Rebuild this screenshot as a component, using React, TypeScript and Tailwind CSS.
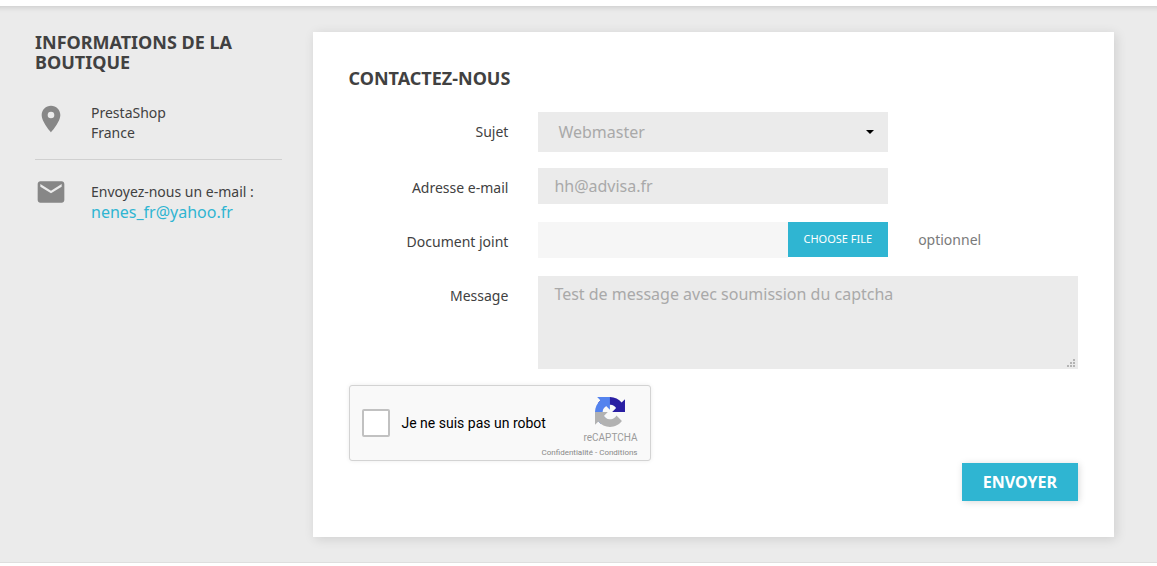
import React from 'react';
import { MdEmail, MdLocationOn } from 'react-icons/md';

const subjects = ['Webmaster', 'Service client'];

interface FieldRowProps {
  id: string;
  label: string;
  wide?: boolean;
  hint?: string;
  children: React.ReactNode;
}

function FieldRow({ id, label, wide, hint, children }: FieldRowProps) {
  return (
    <div className="grid grid-cols-4 gap-x-[30px]">
      <label htmlFor={id} className="pt-[10px] text-right text-sm leading-5">
        {label}
      </label>
      <div className={wide ? 'relative col-span-3 flex' : 'relative col-span-2 flex'}>{children}</div>
      {hint && <span className="pt-2 text-sm leading-5 text-[#7a7a7a]">{hint}</span>}
    </div>
  );
}

function RecaptchaLogo() {
  return (
    <svg viewBox="0 0 64 64" className="h-[30px] w-[30px]" aria-hidden="true">
      <path
        fill="#2a1fa3"
        d="M64 31.955l-.033-1.37V4.687l-7.16 7.16C50.948 4.674 42.033.093 32.05.093c-10.4 0-19.622 4.96-25.458 12.64l11.736 11.86a15.55 15.55 0 0 1 4.754-5.334c2.05-1.6 4.952-2.906 8.968-2.906.485 0 .86.057 1.135.163 4.976.393 9.288 3.14 11.828 7.124l-8.307 8.307L64 31.953"
      />
      <path
        fill="#5483ee"
        d="M31.862.094l-1.37.033H4.594l7.16 7.16C4.58 13.147 0 22.06 0 32.046c0 10.4 4.96 19.622 12.64 25.458L24.5 45.768a15.55 15.55 0 0 1-5.334-4.754c-1.6-2.05-2.906-4.952-2.906-8.968 0-.485.057-.86.163-1.135.393-4.976 3.14-9.288 7.124-11.828l8.307 8.307L31.86.095"
      />
      <path
        fill="#b2b2b2"
        d="M.001 32.045l.033 1.37v25.898l7.16-7.16c5.86 7.173 14.774 11.754 24.76 11.754 10.4 0 19.622-4.96 25.458-12.64l-11.736-11.86a15.55 15.55 0 0 1-4.754 5.334c-2.05 1.6-4.952 2.906-8.968 2.906-.485 0-.86-.057-1.135-.163-4.976-.393-9.288-3.14-11.828-7.124l8.307-8.307c-10.522.04-22.4.066-27.295-.005"
      />
    </svg>
  );
}

function Recaptcha() {
  return (
    <div className="flex h-[76px] w-[302px] justify-between rounded-[3px] border border-[#d3d3d3] bg-[#f9f9f9] px-3 font-['Roboto',sans-serif] shadow-[0_0_4px_rgba(0,0,0,0.08)]">
      <div className="flex items-center gap-3">
        <input
          id="robot"
          type="checkbox"
          className="h-7 w-7 shrink-0 appearance-none rounded-[2px] border-2 border-[#c1c1c1] bg-white"
        />
        <label htmlFor="robot" className="text-sm whitespace-nowrap text-black">
          Je ne suis pas un robot
        </label>
      </div>
      <div className="-ml-6 flex flex-col items-end pt-[11px]">
        <div className="flex flex-col items-center">
          <RecaptchaLogo />
          <span className="mt-[5px] text-[10px] leading-3 text-[#9b9b9b]">reCAPTCHA</span>
        </div>
        <div className="mt-1 text-[8px] leading-[10px] whitespace-nowrap text-[#888]">
          <a href="#confidentialite">Confidentialité</a> - <a href="#conditions">Conditions</a>
        </div>
      </div>
    </div>
  );
}

export default function App() {
  return (
    <div className="bg-white pt-[6px] pb-[3px] font-['Noto_Sans',sans-serif] text-[#414141]">
      <main className="grid grid-cols-4 items-start gap-x-[31px] border-b border-[#dedede] bg-[#ebebeb] pt-[26px] pr-[43px] pb-[25px] pl-[35px] shadow-[inset_0_7px_5px_-5px_rgba(0,0,0,0.12)]">
        {/* Store information */}
        <aside>
          <h4 className="text-lg leading-5 font-bold uppercase">Informations de la boutique</h4>
          <div className="mt-[31px] flex gap-6">
            <MdLocationOn className="h-8 w-8 shrink-0 text-[#878787]" />
            <address className="text-sm leading-5 not-italic">
              PrestaShop
              <br />
              France
            </address>
          </div>
          <hr className="my-4 border-[#d0d0d0]" />
          <div className="flex gap-6">
            <MdEmail className="h-8 w-8 shrink-0 text-[#878787]" />
            <div className="pt-[6px] text-sm leading-5">
              Envoyez-nous un e-mail :
              <a href="mailto:nenes_fr@yahoo.fr" className="block text-base leading-5 text-[#2fb5d2]">
                nenes_fr@yahoo.fr
              </a>
            </div>
          </div>
        </aside>

        {/* Contact form */}
        <section className="col-span-3 bg-white p-9 shadow-[2px_2px_11px_rgba(0,0,0,0.12)]">
          <form onSubmit={(e) => e.preventDefault()}>
            <h3 className="mb-6 text-lg leading-5 font-bold uppercase">Contactez-nous</h3>
            <div className="mb-4 flex flex-col gap-[18px]">
              <div className="flex flex-col gap-4">
                <FieldRow id="subject" label="Sujet">
                  <select
                    id="subject"
                    className="h-10 w-full appearance-none bg-[#ebebeb] pr-8 pl-5 text-base text-[#a9a9a9]"
                  >
                    {subjects.map((subject) => (
                      <option key={subject}>{subject}</option>
                    ))}
                  </select>
                  <svg viewBox="0 0 8 4" className="pointer-events-none absolute top-[18px] right-[14px] h-1 w-2">
                    <path d="M0 0h8L4 4z" fill="#000" />
                  </svg>
                </FieldRow>
                <FieldRow id="email" label="Adresse e-mail">
                  <input
                    id="email"
                    type="email"
                    defaultValue="hh@advisa.fr"
                    className="h-9 w-full bg-[#ebebeb] px-4 text-base text-[#a9a9a9]"
                  />
                </FieldRow>
              </div>
              <FieldRow id="file" label="Document joint" hint="optionnel">
                <input id="file" type="text" readOnly className="h-9 min-w-0 flex-1 bg-[#f6f6f6] px-4 text-base" />
                <button type="button" className="h-[35px] bg-[#2fb5d2] px-4 text-[11px] text-white uppercase">
                  Choose file
                </button>
              </FieldRow>
              <FieldRow id="message" label="Message" wide>
                <textarea
                  id="message"
                  defaultValue="Test de message avec soumission du captcha"
                  className="h-[93px] w-full resize-none bg-[#ebebeb] px-4 py-2 text-base leading-5 text-[#a9a9a9]"
                />
                {/* Resize grip */}
                <svg
                  viewBox="0 0 8 8"
                  fill="#b4b4b4"
                  className="pointer-events-none absolute right-[3px] bottom-[2px] h-2 w-2"
                >
                  <path d="M6 0h2v2H6zM3 3h2v2H3zM6 3h2v2H6zM0 6h2v2H0zM3 6h2v2H3zM6 6h2v2H6z" />
                </svg>
              </FieldRow>
            </div>
            <Recaptcha />
            <div className="mt-[2px] flex justify-end">
              <button
                type="submit"
                className="h-[38px] bg-[#2fb5d2] px-[21px] text-base font-bold text-white uppercase shadow-[1px_1px_7px_rgba(0,0,0,0.15)]"
              >
                Envoyer
              </button>
            </div>
          </form>
        </section>
      </main>
    </div>
  );
}
